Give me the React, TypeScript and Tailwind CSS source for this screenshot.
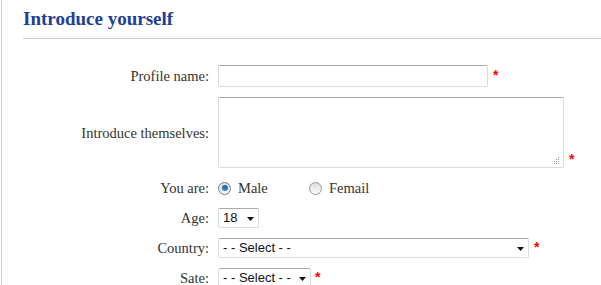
import React from "react";

const serif = "font-['Liberation_Serif','Times_New_Roman',serif]";
const sans = "font-['Liberation_Sans',Arial,sans-serif]";

function Star({ className = "" }: { className?: string }) {
  return (
    <span
      className={`${sans} text-[14px] font-bold leading-none text-[#ff0000] ${className}`}
    >
      *
    </span>
  );
}

function Arrow() {
  return (
    <svg width="7" height="4" viewBox="0 0 7 4" className="mt-[2px] shrink-0">
      <path d="M0 0h7L3.5 4z" fill="#111" />
    </svg>
  );
}

function FakeSelect({ value, width }: { value: string; width: string }) {
  return (
    <div
      className={`${width} ${sans} flex h-[20px] items-center justify-between rounded-[2px] border border-[#d9dce3] border-t-[#a9a9a9] bg-white pl-[4px] pr-[4px] text-[13px] leading-[16px] text-[#111]`}
    >
      <span className="whitespace-pre">{value}</span>
      <Arrow />
    </div>
  );
}

function Radio({ checked }: { checked?: boolean }) {
  return (
    <span
      className={`flex h-[13px] w-[13px] shrink-0 items-center justify-center rounded-full border ${
        checked ? "border-[#6b7d8f]" : "border-[#9a9a9a]"
      } bg-gradient-to-b from-[#dcdcdc] to-[#fafafa]`}
    >
      {checked && (
        <span className="h-[6px] w-[6px] rounded-full bg-gradient-to-b from-[#1d5f9a] to-[#3a8fd0]" />
      )}
    </span>
  );
}

function Row({
  label,
  children,
  className = "",
}: {
  label: string;
  children: React.ReactNode;
  className?: string;
}) {
  return (
    <div className={`flex items-center ${className}`}>
      <div className="w-[207px] shrink-0 text-right">{label}</div>
      <div className="ml-[9px] flex items-center">{children}</div>
    </div>
  );
}

export default function App() {
  return (
    <div
      className={`ml-px min-h-[285px] border-l border-[#c8cee0] bg-white ${serif} text-[14.5px] leading-[20px] text-[#333]`}
    >
      {/* Header */}
      <div className="ml-[21px] border-b border-[#cfcade] pb-[7px] pt-[7px]">
        <h1 className="text-[19px] font-bold leading-[24px] text-[#1d3f95]">
          Introduce yourself
        </h1>
      </div>

      {/* Form */}
      <div className="mt-[26px] flex flex-col gap-[10px]">
        <Row label="Profile name:">
          <div className="h-[22px] w-[270px] rounded-[2px] border border-[#d9dce3] border-t-[#a9a9a9] bg-white" />
          <Star className="ml-[5px] -mt-[2px]" />
        </Row>

        <Row label="Introduce themselves:">
          <div className="relative h-[71px] w-[346px] rounded-[2px] border border-[#d9dce3] border-t-[#a9a9a9] bg-white">
            <svg
              width="7"
              height="7"
              viewBox="0 0 7 7"
              className="absolute bottom-[3px] right-[3px]"
            >
              <rect x="5" y="0" width="1" height="1" fill="#9a9a9a" />
              <rect x="3" y="2" width="1" height="1" fill="#9a9a9a" />
              <rect x="5" y="2" width="1" height="1" fill="#9a9a9a" />
              <rect x="1" y="4" width="1" height="1" fill="#9a9a9a" />
              <rect x="3" y="4" width="1" height="1" fill="#9a9a9a" />
              <rect x="5" y="4" width="1" height="1" fill="#9a9a9a" />
              <rect x="1" y="6" width="1" height="1" fill="#9a9a9a" />
              <rect x="3" y="6" width="1" height="1" fill="#9a9a9a" />
              <rect x="5" y="6" width="1" height="1" fill="#9a9a9a" />
            </svg>
          </div>
          <Star className="ml-[5px] mt-[52px]" />
        </Row>

        <Row label="You are:" className="h-[20px]">
          <div className="flex w-[91px] items-center">
            <Radio checked />
            <span className="ml-[7px]">Male</span>
          </div>
          <div className="flex items-center">
            <Radio />
            <span className="ml-[7px]">Femail</span>
          </div>
        </Row>

        <Row label="Age:" className="h-[20px]">
          <FakeSelect value="18" width="w-[41px]" />
        </Row>

        <Row label="Country:" className="h-[20px]">
          <FakeSelect value="- - Select - -" width="w-[311px]" />
          <Star className="ml-[5px] -mt-[2px]" />
        </Row>

        <Row label="Sate:" className="h-[20px]">
          <FakeSelect value="- - Select - -" width="w-[93px]" />
          <Star className="ml-[4px] -mt-[2px]" />
        </Row>
      </div>
    </div>
  );
}
